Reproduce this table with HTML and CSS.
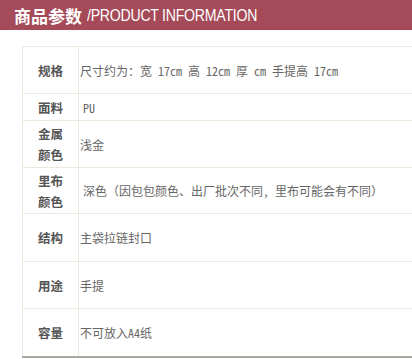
FILE: index.html
```html
<!DOCTYPE html>
<html lang="zh-CN">
<head>
<meta charset="utf-8">
<title>商品参数</title>
<link rel="stylesheet" href="styles.css">
</head>
<body>
<div class="page">
  <div class="banner">
    <span class="banner-cn">商品参数</span>
    <span class="banner-en">/PRODUCT INFORMATION</span>
  </div>
  <table class="spec">
    <tr class="row-tall">
      <th>规格</th>
      <td>尺寸约为：宽 17cm 高 12cm 厚 cm 手提高 17cm</td>
    </tr>
    <tr class="row-short">
      <th>面料</th>
      <td class="indent">PU</td>
    </tr>
    <tr class="row-tall">
      <th>金属<br>颜色</th>
      <td>浅金</td>
    </tr>
    <tr class="row-mid">
      <th>里布<br>颜色</th>
      <td class="indent">深色（因包包颜色、出厂批次不同, 里布可能会有不同）</td>
    </tr>
    <tr class="row-big">
      <th>结构</th>
      <td>主袋拉链封口</td>
    </tr>
    <tr class="row-tall">
      <th>用途</th>
      <td>手提</td>
    </tr>
    <tr class="row-big last">
      <th>容量</th>
      <td>不可放入A4纸</td>
    </tr>
  </table>
</div>
</body>
</html>
```

FILE: styles.css
```css
html, body {
  margin: 0;
  padding: 0;
  background: #ffffff;
  overflow: hidden;
}

.page {
  width: 412px;
  height: 359px;
  overflow: hidden;
}

.banner {
  height: 30px;
  background: #a54a58;
  display: flex;
  align-items: center;
  padding-left: 14px;
  white-space: nowrap;
}

.banner-cn {
  font-family: "Noto Sans CJK SC", sans-serif;
  font-weight: 700;
  font-size: 17px;
  color: #ffffff;
  line-height: 1;
}

.banner-en {
  display: inline-block;
  font-family: "Liberation Sans", sans-serif;
  font-size: 17px;
  color: #ffffff;
  margin-left: 5px;
  line-height: 1;
  letter-spacing: -0.3px;
  transform: scaleX(0.83);
  transform-origin: left center;
}

.spec {
  margin: 16px 0 0 22px;
  width: 420px;
  border-collapse: collapse;
  border-top: 1px solid #ebe9de;
}

.spec th,
.spec td {
  border-bottom: 1px solid #ebe9de;
  padding: 0;
  vertical-align: middle;
}

.spec th {
  width: 55px;
  border-left: 1px solid #ebe9de;
  border-right: 1px solid #ebe9de;
  font-family: "Noto Sans CJK SC", sans-serif;
  font-weight: 700;
  font-size: 12.5px;
  line-height: 21px;
  color: #555555;
  text-align: center;
}

.spec td {
  font-family: "Noto Sans Mono CJK SC", "Noto Sans CJK SC", monospace;
  font-size: 12px;
  color: #666666;
  padding-left: 1px;
  white-space: nowrap;
}

.spec td.indent {
  padding-left: 4px;
}

.row-short th, .row-short td { height: 26px; }
.row-tall th, .row-tall td { height: 46px; }
.row-mid th, .row-mid td { height: 45px; }
.row-big th, .row-big td { height: 47px; }

.spec tr.last th,
.spec tr.last td {
  border-bottom: 2px solid #aaa9a0;
}
```
